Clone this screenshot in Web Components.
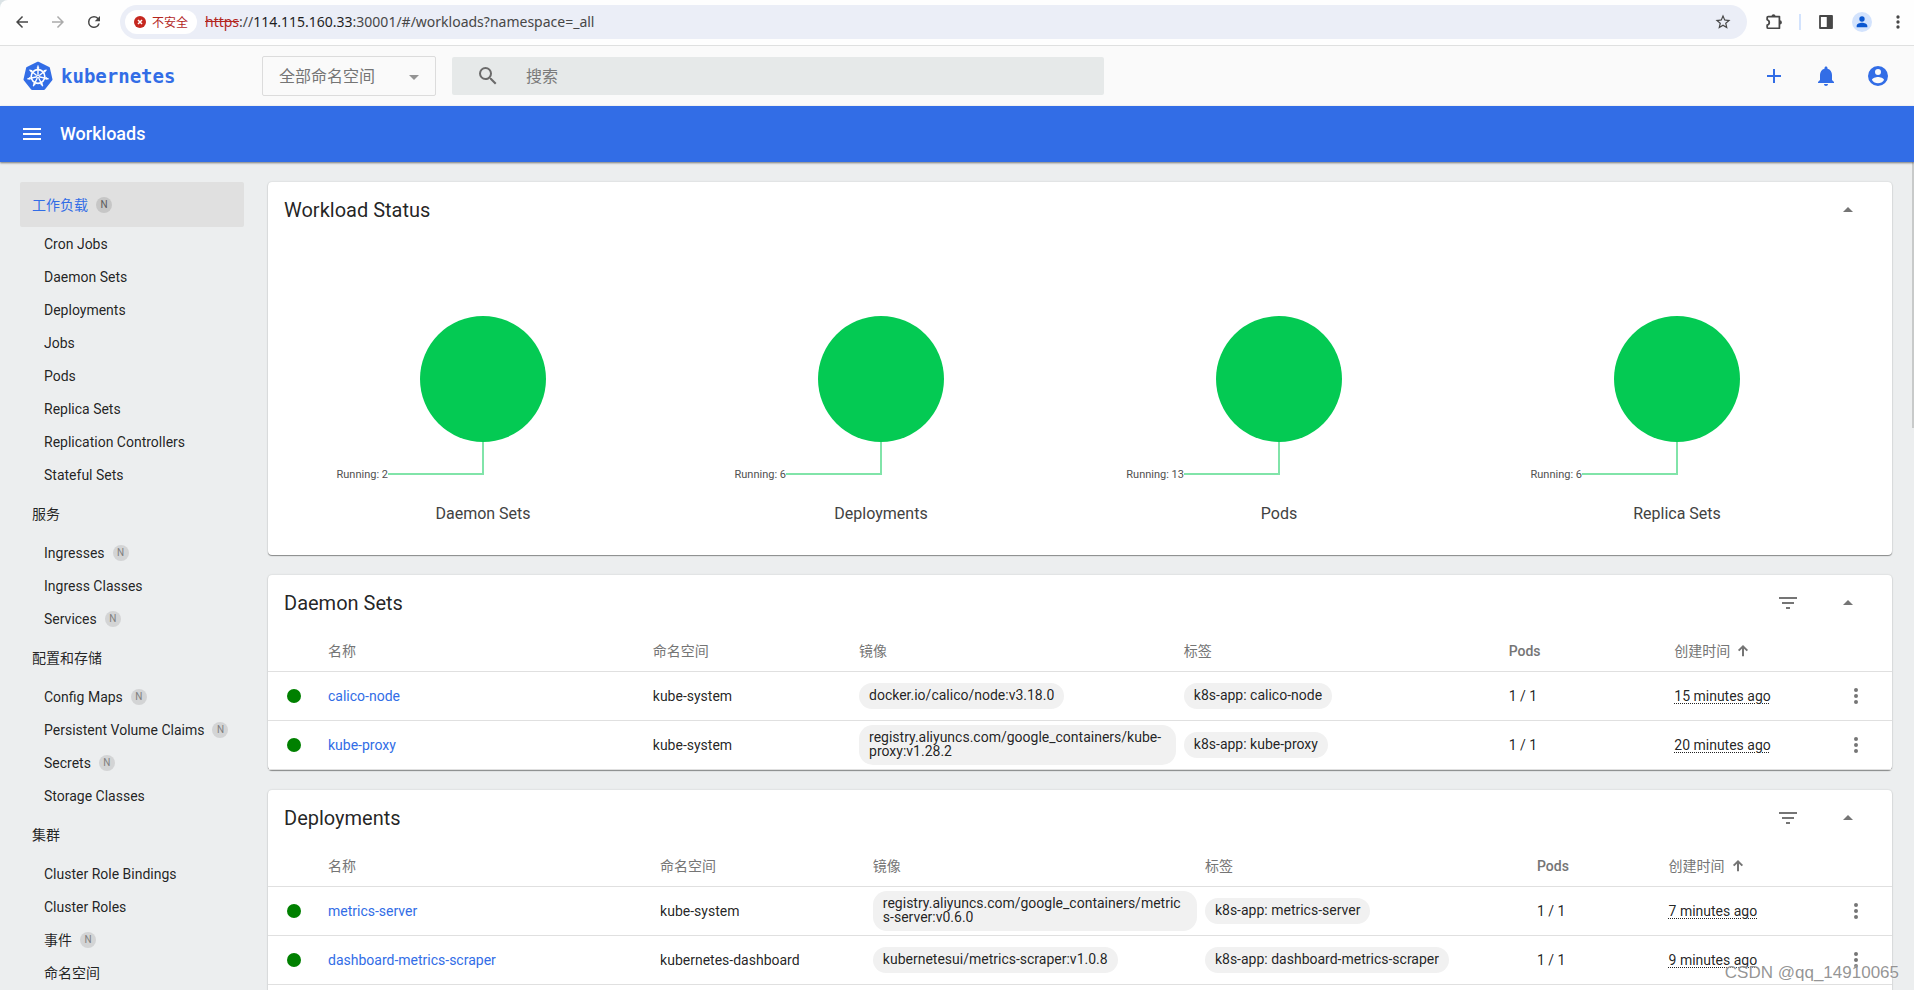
<!DOCTYPE html>
<html lang="zh-CN">
<head>
<meta charset="utf-8">
<title>Kubernetes Dashboard</title>
<style>
  html, body { margin: 0; height: 100%; }
  body {
    font-family: Roboto, "Noto Sans CJK SC", sans-serif;
    font-size: 14px;
    color: rgba(0, 0, 0, .87);
    overflow: hidden;
  }
</style>
</head>
<body>
<dashboard-app></dashboard-app>

<script>
const define = (name, html, setup) => {
  const template = document.createElement('template');
  template.innerHTML = `<style>*{box-sizing:border-box}a{text-decoration:none;color:inherit}
    button{font:inherit;color:inherit;background:none;border:0;padding:0;margin:0;display:flex;align-items:center;justify-content:center;cursor:pointer}
    svg{display:block;flex:none}</style>` + html;
  customElements.define(name, class extends HTMLElement {
    constructor() {
      super();
      this.attachShadow({ mode: 'open' }).append(template.content.cloneNode(true));
    }
    connectedCallback() {
      if (setup && !this.ready) { this.ready = true; setup(this, this.shadowRoot); }
    }
  });
};

/* ---------- icons ---------- */
const spokes = Array.from({ length: 7 }, (_, k) =>
  `<path transform="rotate(${k * 360 / 7} 15 15.5)" d="M15 13.5V4.6M13.8 7h2.4" />`).join('');
const heptagon = Array.from({ length: 7 }, (_, k) => {
  const a = -Math.PI / 2 + k * 2 * Math.PI / 7;
  return `${(15 + 13.6 * Math.cos(a)).toFixed(2)},${(15.5 + 13.6 * Math.sin(a)).toFixed(2)}`;
}).join(' ');
const ICONS = {
  back: '<path d="M20 11H7.83l5.59-5.59L12 4l-8 8 8 8 1.41-1.41L7.83 13H20v-2z"/>',
  forward: '<path d="m12 4-1.41 1.41L16.17 11H4v2h12.17l-5.58 5.59L12 20l8-8z"/>',
  reload: '<path d="M17.65 6.35A7.96 7.96 0 0 0 12 4a8 8 0 1 0 7.73 10h-2.08A6 6 0 1 1 12 6c1.66 0 3.14.69 4.22 1.78L13 11h7V4l-2.35 2.35z"/>',
  insecure: '<circle cx="12" cy="12" r="12"/><path d="m8 8 8 8m0-8-8 8" stroke="#fff" stroke-width="3"/>',
  star: '<path d="m22 9.24-7.19-.62L12 2 9.19 8.63 2 9.24l5.46 4.73L5.82 21 12 17.27 18.18 21l-1.63-7.03L22 9.24zM12 15.4l-3.76 2.27 1-4.28-3.32-2.88 4.38-.38L12 6.1l1.71 4.04 4.38.38-3.32 2.88 1 4.28L12 15.4z"/>',
  extension: '<path d="M5 5.500H18.500V19.500H5q-1.200 0-1.200-1.200V15.700a3.300 3.300 0 0 0 0-6.400V6.700q0-1.200 1.200-1.200z" fill="none" stroke="currentColor" stroke-width="2.100" stroke-linejoin="round"/><path d="M9 5.200a2.400 2.400 0 0 1 4.800 0zM19 10a2.500 2.500 0 0 1 0 5z"/>',
  panel: '<path d="M4 4h16v16H4z" fill="none" stroke="currentColor" stroke-width="2.400" stroke-linejoin="round"/><path d="M13 4h7v16h-7z"/>',
  person: '<path d="M12 11.500a4 4 0 1 0 0-8 4 4 0 0 0 0 8zm0 1.500c-3.500 0-8 1.600-8 4.800V20h16v-2.200c0-3.200-4.500-4.800-8-4.800z"/>',
  more: '<path d="M12 8a2 2 0 1 0 0-4 2 2 0 0 0 0 4zm0 2a2 2 0 1 0 0 4 2 2 0 0 0 0-4zm0 6a2 2 0 1 0 0 4 2 2 0 0 0 0-4z"/>',
  search: '<path d="M15.5 14h-.79l-.28-.27A6.471 6.471 0 0 0 16 9.5 6.5 6.5 0 1 0 9.5 16c1.61 0 3.090-.59 4.230-1.57l.27.28v.79l5 4.990L20.490 19l-4.990-5zm-6 0C7.010 14 5 11.990 5 9.500S7.010 5 9.500 5 14 7.010 14 9.500 11.990 14 9.500 14z"/>',
  add: '<path d="M19 13h-6v6h-2v-6H5v-2h6V5h2v6h6v2z"/>',
  bell: '<path d="M12 22c1.100 0 2-.9 2-2h-4c0 1.100.89 2 2 2zm6-6v-5c0-3.070-1.640-5.640-4.500-6.320V4c0-.83-.67-1.500-1.500-1.500s-1.500.67-1.500 1.500v.68C7.630 5.360 6 7.920 6 11v5l-2 2v1h16v-1l-2-2z"/>',
  account: '<path d="M12 2a10 10 0 1 0 0 20 10 10 0 0 0 0-20zm0 3a3 3 0 1 1 0 6 3 3 0 0 1 0-6zm0 14.200A7.200 7.200 0 0 1 6 15.980c.03-1.990 4-3.080 6-3.080s5.970 1.090 6 3.080a7.200 7.200 0 0 1-6 3.220z"/>',
  menu: '<path d="M3 18h18v-2H3v2zm0-5h18v-2H3v2zm0-7v2h18V6H3z"/>',
  up: '<path d="m7 14 5-5 5 5z"/>',
  down: '<path d="m7 10 5 5 5-5z"/>',
  filter: '<path d="M10 18h4v-2h-4v2zM3 6v2h18V6H3zm3 7h12v-2H6v2z"/>',
  sort: '<path d="M12 20V5.500M5.500 11.500l6.500-6.500 6.500 6.500" fill="none" stroke="currentColor" stroke-width="3"/>'
};
const icon = (name, size = 24) =>
  `<svg width="${size}" height="${size}" viewBox="0 0 24 24" fill="currentColor" aria-hidden="true">${ICONS[name]}</svg>`;

/* ---------- browser chrome ---------- */
define('browser-bar', `
<style>
  :host { display: block; background: #dbe3e6; flex: none; }
  .bar { display: flex; align-items: center; height: 46px; background: #fefefe; border-bottom: 1px solid #dfe0e0; border-top-left-radius: 8px; padding: 0 6px 2px 12px; color: #474747; }
  nav { display: flex; gap: 16px; }
  nav button { width: 20px; height: 20px; }
  .off { color: #ababab; }
  .omni { flex: 1; display: flex; align-items: center; height: 34px; margin-left: 16px; padding: 0 15px 0 5px; background: #ebeef7; border-radius: 17px; }
  .chip { display: flex; gap: 6px; width: 72px; height: 24px; border-radius: 12px; background: #fff; color: #b3261e; font-size: 12px; }
  .chip svg { color: #c5271f; }
  .url { flex: 1; margin-left: 8px; font: 14px/20px "Noto Sans", sans-serif; color: #474747; }
  .url s { color: #b3261e; }
  .url b { font-weight: 400; color: #1f1f1f; }
  .tools { display: flex; align-items: center; margin-left: 9px; }
  .tools button { width: 36px; height: 24px; }
  .tools i { width: 2px; height: 16px; margin: 0 7px; background: #d3e3fd; }
  .tools .avatar { width: 20px; height: 20px; margin: 0 8px; border-radius: 50%; background: #d3e3fd; color: #0b57d0; }
  .tools .dots { width: 36px; margin-right: -8px; }
</style>
<div class="bar">
  <nav><button aria-label="后退">${icon('back', 18)}</button><button class="off" aria-label="前进">${icon('forward', 18)}</button><button aria-label="重新加载">${icon('reload', 18)}</button></nav>
  <div class="omni">
    <button class="chip">${icon('insecure', 12)}<span>不安全</span></button>
    <span class="url"><s>https</s>://<b>114.115.160.33</b>:30001/#/workloads?namespace=_all</span>
    <button aria-label="收藏">${icon('star', 18)}</button>
  </div>
  <div class="tools">
    <button aria-label="扩展程序">${icon('extension', 20)}</button><i></i>
    <button aria-label="侧边栏">${icon('panel', 18)}</button>
    <button class="avatar" aria-label="用户">${icon('person', 16)}</button>
    <button class="dots" aria-label="更多">${icon('more', 20)}</button>
  </div>
</div>`);

/* ---------- application header ---------- */
define('app-header', `
<style>
  :host { display: flex; align-items: center; flex: none; height: 60px; padding: 0 24px 0 23px; background: #fafafa; }
  .logo { display: flex; align-items: center; gap: 8px; width: 239px; color: #326de6; font: bold 19px/24px "DejaVu Sans Mono", monospace; }
  .ns { position: relative; width: 174px; height: 40px; }
  select { width: 100%; height: 100%; appearance: none; background: transparent; border: 1px solid #dcdcdc; border-radius: 2px; padding: 0 16px; font: inherit; font-size: 16px; color: #757575; }
  .ns svg { position: absolute; right: 10px; top: 9px; color: #949494; pointer-events: none; }
  .search { display: flex; align-items: center; gap: 26px; width: 652px; height: 38px; margin-left: 16px; padding-left: 24px; background: #e6e9e9; border-radius: 2px; color: #6b6b6b; }
  input { flex: 1; border: 0; outline: 0; background: none; padding: 0; font: inherit; font-size: 16px; }
  input::placeholder { color: #7a7a7a; opacity: 1; }
  .actions { display: flex; gap: 28px; margin-left: auto; color: #326de6; }
</style>
<a class="logo" href="#/workloads">
  <svg width="30" height="30" viewBox="0 0 30 30" aria-hidden="true"><polygon points="${heptagon}" fill="#326de6" stroke="#326de6" stroke-width="2.500" stroke-linejoin="round"/><g fill="none" stroke="#fff" stroke-width="1.400">${spokes}<circle cx="15" cy="15.500" r="6.800" stroke-width="1.700"/></g><circle cx="15" cy="15.500" r="2" fill="#fff"/><circle cx="15" cy="15.500" r=".8" fill="#326de6"/></svg>
  <span>kubernetes</span></a>
<div class="ns"><select aria-label="命名空间"><option>全部命名空间</option></select>${icon('down')}</div>
<label class="search">${icon('search')}<input type="search" placeholder="搜索" aria-label="搜索"></label>
<div class="actions"><button aria-label="创建">${icon('add')}</button><button aria-label="通知">${icon('bell')}</button><button aria-label="账户">${icon('account')}</button></div>`);

define('page-toolbar', `
<style>
  :host { display: flex; align-items: center; gap: 16px; flex: none; height: 56px; padding: 0 20px; background: #326de6; color: #fff; box-shadow: 0 1px 2px rgba(0, 0, 0, .5); position: relative; z-index: 1; }
  h1 { margin: 0; font-size: 18px; line-height: 24px; font-weight: 500; }
</style>
<button aria-label="菜单">${icon('menu')}</button><h1><slot></slot></h1>`);

/* ---------- side navigation ---------- */
define('nav-entry', `
<style>
  :host { display: block; padding: 0 20px; }
  a { display: flex; align-items: center; gap: 8px; height: 33px; padding-left: 24px; border-radius: 2px; line-height: 20px; }
  :host([group]) a { height: 45px; padding-left: 12px; }
  :host([active]) a { background: #e0e0e0; color: #326de6; }
  .badge { display: none; align-items: center; justify-content: center; width: 16px; height: 16px; border-radius: 50%; background: #d3d4d5; color: #7f8080; font-size: 10px; line-height: 16px; }
  :host([namespaced]) .badge { display: flex; }
  :host([active]) .badge { background: #c6c6c6; color: #5c5c5c; }
</style>
<a href="#/"><slot></slot><span class="badge">N</span></a>`);

define('side-nav', `
<style>:host { display: block; flex: none; width: 264px; padding-top: 20px; }</style>
<nav>
  <nav-entry group active namespaced>工作负载</nav-entry>
  <nav-entry>Cron Jobs</nav-entry>
  <nav-entry>Daemon Sets</nav-entry>
  <nav-entry>Deployments</nav-entry>
  <nav-entry>Jobs</nav-entry>
  <nav-entry>Pods</nav-entry>
  <nav-entry>Replica Sets</nav-entry>
  <nav-entry>Replication Controllers</nav-entry>
  <nav-entry>Stateful Sets</nav-entry>
  <nav-entry group>服务</nav-entry>
  <nav-entry namespaced>Ingresses</nav-entry>
  <nav-entry>Ingress Classes</nav-entry>
  <nav-entry namespaced>Services</nav-entry>
  <nav-entry group>配置和存储</nav-entry>
  <nav-entry namespaced>Config Maps</nav-entry>
  <nav-entry namespaced>Persistent Volume Claims</nav-entry>
  <nav-entry namespaced>Secrets</nav-entry>
  <nav-entry>Storage Classes</nav-entry>
  <nav-entry group>集群</nav-entry>
  <nav-entry>Cluster Role Bindings</nav-entry>
  <nav-entry>Cluster Roles</nav-entry>
  <nav-entry namespaced>事件</nav-entry>
  <nav-entry>命名空间</nav-entry>
</nav>`);

/* ---------- cards ---------- */
define('dash-card', `
<style>
  :host { display: block; background: #fff; border-radius: 4px; box-shadow: 0 1px 1px rgba(0, 0, 0, .4), 0 0 2px rgba(0, 0, 0, .16); }
  header { display: flex; align-items: center; height: 56px; padding: 0 32px 0 16px; }
  h2 { flex: 1; margin: 0; font-size: 20px; line-height: 24px; font-weight: 400; }
  .tools { display: flex; gap: 36px; color: #757575; }
  .filter { display: none; }
  :host([filterable]) .filter { display: flex; }
</style>
<header><h2><slot name="title"></slot></h2>
<div class="tools"><button class="filter" aria-label="筛选">${icon('filter')}</button><button aria-label="收起">${icon('up')}</button></div></header>
<slot></slot>`);

define('status-chart', `
<style>
  :host { display: flex; flex-direction: column; align-items: center; flex: 1; }
  text { font-size: 11px; fill: #505050; }
  .name { font-size: 16px; line-height: 32px; color: #424242; }
</style>
<svg width="320" height="260" viewBox="0 0 320 260" role="img">
  <circle cx="160" cy="141" r="63" fill="#04ca53"/>
  <path d="M160 204v32H65" fill="none" stroke="#81e4a9" stroke-width="2"/>
  <text x="65" y="240" text-anchor="end"></text>
</svg>
<div class="name"><slot></slot></div>`, (el, root) => {
  root.querySelector('text').textContent = 'Running: ' + el.getAttribute('running');
});

/* ---------- resource tables ---------- */
const RESOURCES = {
  daemonsets: [
    ['calico-node', 'kube-system', 'docker.io/calico/node:v3.18.0', 'k8s-app: calico-node', '1 / 1', '15 minutes ago'],
    ['kube-proxy', 'kube-system', 'registry.aliyuncs.com/google_containers/kube-proxy:v1.28.2', 'k8s-app: kube-proxy', '1 / 1', '20 minutes ago']
  ],
  deployments: [
    ['metrics-server', 'kube-system', 'registry.aliyuncs.com/google_containers/metrics-server:v0.6.0', 'k8s-app: metrics-server', '1 / 1', '7 minutes ago'],
    ['dashboard-metrics-scraper', 'kubernetes-dashboard', 'kubernetesui/metrics-scraper:v1.0.8', 'k8s-app: dashboard-metrics-scraper', '1 / 1', '9 minutes ago']
  ]
};
define('resource-table', `
<style>
  :host { display: block; --wide: 20%; --ns: 12.7%; --pods: 10.2%; }
  :host([resource="deployments"]) { --wide: 20.45%; --ns: 13.1%; --pods: 8.1%; padding-bottom: 48px; }
  table { width: 100%; table-layout: fixed; border-collapse: separate; border-spacing: 0; line-height: 20px; }
  th, td { padding: 0; text-align: left; font-weight: 400; }
  th { height: 41px; border-bottom: 1px solid #e0e0e0; color: #757575; }
  td { height: 49px; border-bottom: 1px solid #e0e0e0; }
  .status { width: 60px; padding-left: 19px; }
  .name, .image, .labels { width: var(--wide); }
  .ns { width: var(--ns); }
  .pods { width: var(--pods); }
  th.pods { font-weight: 500; }
  .menu { width: 72px; }
  .menu button { width: 100%; height: 24px; color: #757575; }
  .dot { display: block; width: 14px; height: 14px; border-radius: 50%; background: #008000; }
  td a { color: #326de6; }
  .chip { display: block; width: fit-content; max-width: calc(100% - 8px); padding: 5px 10px 7px; border-radius: 14px; background: #f1f1f1; line-height: 14px; overflow-wrap: anywhere; }
  .sort { gap: 5px; }
  .age { text-decoration: underline dotted 1px; text-underline-offset: 2px; }
</style>
<table>
  <thead><tr><th class="status"></th><th class="name">名称</th><th class="ns">命名空间</th><th class="image">镜像</th><th class="labels">标签</th><th class="pods">Pods</th><th><button class="sort">创建时间${icon('sort', 16)}</button></th><th class="menu"></th></tr></thead>
  <tbody></tbody>
</table>`, (el, root) => {
  root.querySelector('tbody').innerHTML = RESOURCES[el.getAttribute('resource')].map(([name, ns, image, label, pods, age]) => `
    <tr><td class="status"><span class="dot"></span></td><td class="name"><a href="#/${name}">${name}</a></td><td class="ns">${ns}</td>
    <td class="image"><span class="chip">${image}</span></td><td class="labels"><span class="chip">${label}</span></td>
    <td class="pods">${pods}</td><td><span class="age">${age}</span></td><td class="menu"><button aria-label="操作">${icon('more')}</button></td></tr>`).join('');
});

/* ---------- application ---------- */
define('dashboard-app', `
<style>
  :host { display: flex; flex-direction: column; height: 100vh; background: #eceeef; position: relative; overflow: hidden; }
  .body { flex: 1; min-height: 0; display: flex; overflow: hidden; position: relative; }
  main { flex: 1; min-width: 0; display: flex; flex-direction: column; gap: 20px; padding: 20px 22px 0 4px; }
  .charts { display: flex; padding: 0 16px 25px; }
  .thumb { position: absolute; right: 0; top: 0; width: 2px; height: 266px; background: #c8caca; }
  .mark { position: absolute; right: 15px; bottom: 6px; font: 17px/22px "Liberation Sans", sans-serif; color: rgba(130, 130, 130, .85); text-shadow: 0 0 2px #fff; }
</style>
<browser-bar></browser-bar>
<app-header></app-header>
<page-toolbar>Workloads</page-toolbar>
<div class="body">
  <side-nav></side-nav>
  <main>
    <dash-card><span slot="title">Workload Status</span>
      <div class="charts">
        <status-chart running="2">Daemon Sets</status-chart>
        <status-chart running="6">Deployments</status-chart>
        <status-chart running="13">Pods</status-chart>
        <status-chart running="6">Replica Sets</status-chart>
      </div>
    </dash-card>
    <dash-card filterable><span slot="title">Daemon Sets</span><resource-table resource="daemonsets"></resource-table></dash-card>
    <dash-card filterable><span slot="title">Deployments</span><resource-table resource="deployments"></resource-table></dash-card>
  </main>
  <div class="thumb"></div>
</div>
<div class="mark">CSDN @qq_14910065</div>`);
</script>
</body>
</html>
